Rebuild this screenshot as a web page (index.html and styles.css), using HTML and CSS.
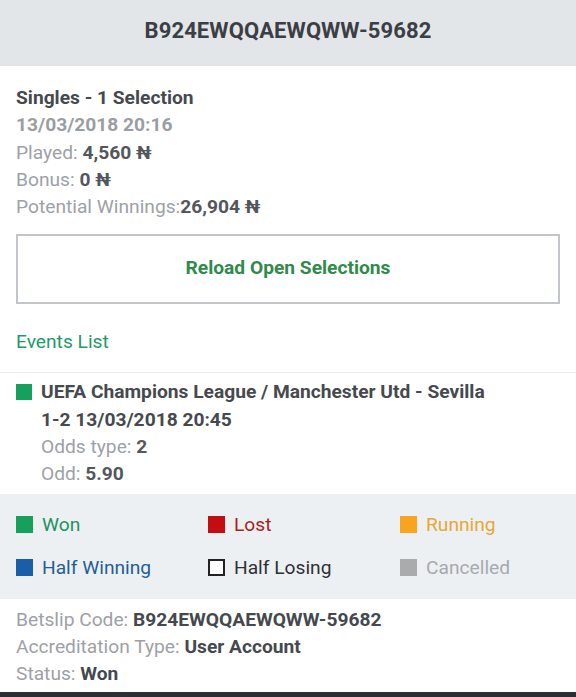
FILE: index.html
```html
<!DOCTYPE html>
<html>
<head>
<meta charset="utf-8">
<link rel="stylesheet" href="styles.css">
</head>
<body>
<div class="page">
  <header class="top">B924EWQQAEWQWW-59682</header>
  <section class="summary">
    <div class="title">Singles - 1 Selection</div>
    <div class="date">13/03/2018 20:16</div>
    <div class="row"><span class="lbl">Played: </span><b>4,560 ₦</b></div>
    <div class="row"><span class="lbl">Bonus: </span><b>0 ₦</b></div>
    <div class="row"><span class="lbl">Potential Winnings:</span><b>26,904 ₦</b></div>
    <div class="btn">Reload Open Selections</div>
    <div class="events-title">Events List</div>
  </section>
  <section class="event">
    <span class="sq won-sq"></span>
    <div class="event-body">
      <div class="ev-title">UEFA Champions League / Manchester Utd - Sevilla</div>
      <div class="ev-title">1-2 13/03/2018 20:45</div>
      <div class="row"><span class="lbl">Odds type: </span><b>2</b></div>
      <div class="row"><span class="lbl">Odd: </span><b>5.90</b></div>
    </div>
  </section>
  <section class="legend">
    <div class="item won"><span class="sq won-sq"></span>Won</div>
    <div class="item lost"><span class="sq lost-sq"></span>Lost</div>
    <div class="item running"><span class="sq run-sq"></span>Running</div>
    <div class="item halfwin"><span class="sq hw-sq"></span>Half Winning</div>
    <div class="item halflose"><span class="sq hl-sq"></span>Half Losing</div>
    <div class="item cancelled"><span class="sq can-sq"></span>Cancelled</div>
  </section>
  <section class="footer">
    <div class="row"><span class="lbl">Betslip Code: </span><b>B924EWQQAEWQWW-59682</b></div>
    <div class="row"><span class="lbl">Accreditation Type: </span><b>User Account</b></div>
    <div class="row"><span class="lbl">Status: </span><b>Won</b></div>
  </section>
  <div class="bottom-bar"></div>
</div>
</body>
</html>
```
FILE: styles.css
```css
* { box-sizing: border-box; }
html, body { margin: 0; padding: 0; background: #fff; }
body { font-family: Roboto, "Liberation Sans", sans-serif; font-size: 19.2px; color: #4a4e53; }
.page { width: 576px; height: 697px; overflow: hidden; display: flex; flex-direction: column; }
.top {
  height: 66px; background: #e3e6e9; color: #3b3f44;
  display: flex; align-items: center; justify-content: center;
  padding-bottom: 6px;
  font-weight: 700; font-size: 22px; letter-spacing: 0.1px;
}
.summary { padding: 18px 16px 16px; line-height: 27.3px; }
.title { font-weight: 700; color: #45494e; }
.date { font-weight: 700; color: #9a9ea3; }
.lbl { color: #9da1a6; }
b { font-weight: 700; color: #53575c; }
.btn {
  margin-top: 14px; height: 70px; border: 2px solid #c2c6ca;
  display: flex; align-items: center; justify-content: center;
  padding-bottom: 4px;
  color: #2f8a4c; font-weight: 700; font-size: 19.2px;
}
.events-title { margin-top: 24px; color: #1f9a6a; line-height: 28px; }
.event {
  border-top: 1px solid #e9ebed; padding: 5px 16px 6px;
  display: flex; gap: 9px; line-height: 27.3px;
}
.event .sq { margin-top: 6px; width: 16px; height: 16px; }
.ev-title { font-weight: 700; color: #46494e; }
.sq { display: inline-block; width: 17px; height: 17px; flex: none; }
.won-sq { background: #15a05c; }
.lost-sq { background: #c40d10; }
.run-sq { background: #f8a51d; }
.hw-sq { background: #1b5ea8; }
.hl-sq { background: #fff; border: 2px solid #222; }
.can-sq { background: #a9abad; }
.legend {
  background: #edf0f2; padding: 17px 16px;
  display: grid; grid-template-columns: 192px 192px 160px; row-gap: 15px;
  line-height: 28px;
}
.item { display: flex; align-items: center; gap: 9px; }
.won { color: #1c9360; }
.lost { color: #a81e20; }
.running { color: #e6a835; }
.halfwin { color: #1e5f96; }
.halflose { color: #2e3134; }
.cancelled { color: #a6aaae; }
.footer { padding: 7px 16px 0; line-height: 27.3px; flex: 1; }
.footer b { color: #45494e; }
.bottom-bar { height: 5px; background: #2b2f34; }
```
